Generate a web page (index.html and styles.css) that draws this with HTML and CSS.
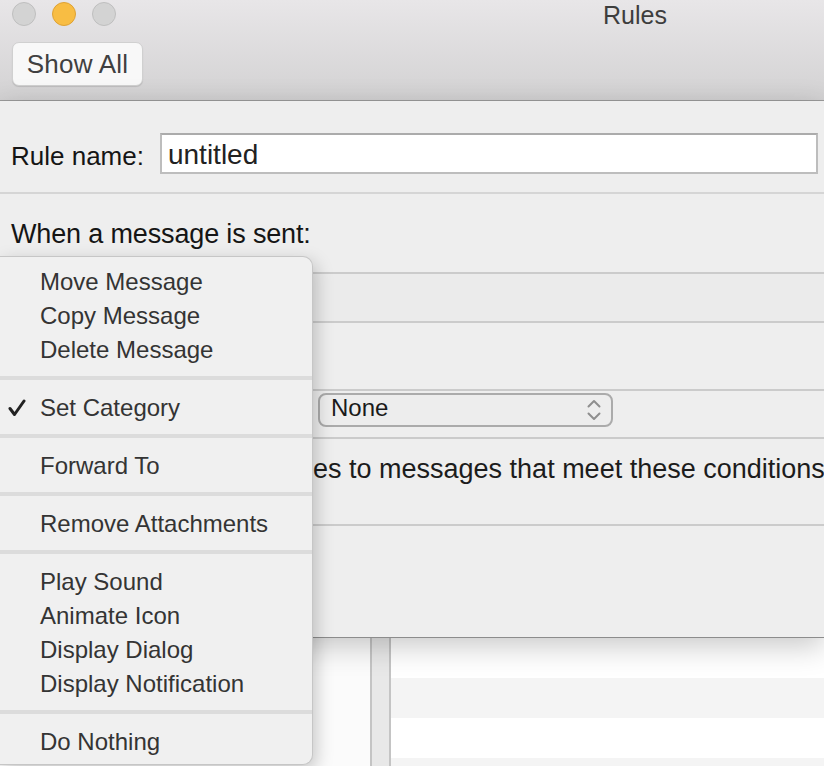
FILE: index.html
```html
<!DOCTYPE html>
<html>
<head>
<meta charset="utf-8">
<link rel="stylesheet" href="styles.css">
</head>
<body>
<div class="window">
  <header class="titlebar">
    <div class="titlerow">
      <div class="lights">
        <span class="light"></span>
        <span class="light yellow"></span>
        <span class="light"></span>
      </div>
      <div class="title">Rules</div>
    </div>
    <div class="toolbar"><button class="btn">Show All</button></div>
  </header>

  <section class="sheet">
    <div class="name-row">
      <label class="name-label">Rule name:</label>
      <div class="input">untitled</div>
    </div>
    <div class="sep"></div>
    <div class="when">When a message is sent:</div>
    <div class="rows">
      <div class="row r1"></div>
      <div class="row r2"></div>
      <div class="row r3">
        <div class="cat-label"></div>
        <div class="popup">
          <span>None</span>
          <svg class="chev" width="14" height="22" viewBox="0 0 14 22"><path d="M1.5 7.5 L7 2 L12.5 7.5 M1.5 14.5 L7 20 L12.5 14.5" fill="none" stroke="#8e8e8e" stroke-width="2" stroke-linecap="round" stroke-linejoin="round"/></svg>
        </div>
      </div>
      <div class="row r4">
        <span class="cond">es to messages that meet these conditions</span>
      </div>
      <div class="row r5"></div>
    </div>
  </section>

  <section class="list">
    <div class="left-pane"></div>
    <div class="divider"></div>
    <div class="stripes">
      <div class="stripe"></div>
      <div class="stripe"></div>
      <div class="stripe"></div>
      <div class="stripe"></div>
    </div>
  </section>

  <nav class="menu">
    <div class="item"><span class="check"></span>Move Message</div>
    <div class="item"><span class="check"></span>Copy Message</div>
    <div class="item"><span class="check"></span>Delete Message</div>
    <div class="msep"></div>
    <div class="item"><span class="check"><svg width="18" height="18" viewBox="0 0 18 18"><path d="M2 9.5 L6.5 15.5 L16 2" fill="none" stroke="#222" stroke-width="3" stroke-linecap="round" stroke-linejoin="round"/></svg></span>Set Category</div>
    <div class="msep"></div>
    <div class="item"><span class="check"></span>Forward To</div>
    <div class="msep"></div>
    <div class="item"><span class="check"></span>Remove Attachments</div>
    <div class="msep"></div>
    <div class="item"><span class="check"></span>Play Sound</div>
    <div class="item"><span class="check"></span>Animate Icon</div>
    <div class="item"><span class="check"></span>Display Dialog</div>
    <div class="item"><span class="check"></span>Display Notification</div>
    <div class="msep"></div>
    <div class="item"><span class="check"></span>Do Nothing</div>
  </nav>
</div>
</body>
</html>
```

FILE: styles.css
```css
html, body {
  margin: 0;
  padding: 0;
}
body {
  width: 824px;
  height: 766px;
  overflow: hidden;
  font-family: "Liberation Sans", Arial, sans-serif;
  background: #ffffff;
}
.window {
  position: relative;
  height: 766px;
  overflow: hidden;
}

/* title bar */
.titlebar {
  height: 100px;
  border-bottom: 1px solid #9b9b9b;
  background: linear-gradient(#e8e6e8, #d3d2d3);
}
.titlerow {
  display: flex;
  align-items: center;
  height: 28px;
}
.lights {
  display: flex;
  gap: 16px;
  padding-left: 12px;
}
.light {
  width: 22px;
  height: 22px;
  border-radius: 50%;
  background: #d3d3d3;
  border: 1px solid #bfbfbf;
}
.light.yellow {
  background: #f8bd43;
  border-color: #dea235;
}
.title {
  align-self: flex-start;
  margin-top: 1px;
  margin-left: 487px;
  font-size: 25px;
  line-height: 28px;
  color: #3d3d3d;
}
.toolbar {
  padding: 14px 0 0 12px;
}
.btn {
  display: block;
  width: 131px;
  height: 44px;
  padding: 0;
  font-family: "Liberation Sans", Arial, sans-serif;
  font-size: 26px;
  letter-spacing: 0.2px;
  color: #404040;
  background: #f8f8f8;
  border: 1px solid #d0d0d0;
  border-radius: 7px;
  box-shadow: 0 1px 1px rgba(0, 0, 0, 0.12);
}

/* sheet */
.sheet {
  position: relative;
  z-index: 1;
  height: 536px;
  display: flex;
  flex-direction: column;
  background: #eeeeee;
  border-bottom: 1px solid #8c8c8c;
  box-shadow: 0 8px 28px rgba(0, 0, 0, 0.22);
}
.name-row {
  display: flex;
  align-items: center;
  gap: 16px;
  padding: 32px 6px 0 11px;
}
.name-label {
  font-size: 26px;
  line-height: 30px;
  padding-top: 4px;
  color: #151515;
}
.input {
  flex: 1;
  box-sizing: border-box;
  height: 41px;
  padding: 2px 0 0 6px;
  font-size: 28px;
  line-height: 35px;
  color: #222;
  background: #ffffff;
  border: 2px solid #bdbdbd;
  border-top-color: #ababab;
}
.sep {
  height: 2px;
  margin-top: 18px;
  background: #d5d5d5;
}
.when {
  margin-top: 25px;
  padding-left: 11px;
  font-size: 27px;
  letter-spacing: -0.15px;
  line-height: 30px;
  color: #151515;
}
.rows {
  flex: 1;
  display: flex;
  flex-direction: column;
  margin-top: 23px;
}
.row {
  box-sizing: border-box;
  border-top: 2px solid #cbcbcb;
}
.r1 { height: 49px; background: #ebebeb; }
.r2 { height: 68px; }
.r3 {
  height: 48px;
  display: flex;
  gap: 12px;
  padding-top: 2px;
}
.cat-label {
  width: 306px;
}
.popup {
  box-sizing: border-box;
  width: 295px;
  height: 34px;
  display: flex;
  align-items: center;
  justify-content: space-between;
  padding: 0 10px 4px 11px;
  font-size: 24px;
  color: #1a1a1a;
  background: #ededed;
  border: 2px solid #ababab;
  border-radius: 8px;
}
.chev {
  margin-top: 4px;
}
.r4 {
  height: 87px;
  padding: 15px 0 0 313px;
}
.cond {
  display: block;
  white-space: nowrap;
  font-size: 27px;
  line-height: 30px;
  color: #1c1c1c;
}
.r5 { flex: 1; }

/* background list */
.list {
  display: flex;
  height: 128px;
}
.left-pane {
  width: 370px;
  background: #fbfbfb;
}
.divider {
  width: 17px;
  background: #e8e8e8;
  border-left: 2px solid #c4c4c4;
  border-right: 2px solid #c4c4c4;
}
.stripes {
  flex: 1;
}
.stripe {
  height: 40px;
  background: #ffffff;
}
.stripe:nth-child(even) {
  background: #f4f4f4;
}

/* pop-up menu */
.menu {
  position: absolute;
  z-index: 5;
  left: 0;
  top: 256px;
  width: 313px;
  height: 509px;
  box-sizing: border-box;
  padding: 8px 0 6px;
  background: #f0f0f0;
  border: 1px solid #c6c6c6;
  border-left: none;
  border-radius: 0 10px 10px 0;
  box-shadow: 3px 6px 18px rgba(0, 0, 0, 0.22);
}
.item {
  display: flex;
  align-items: center;
  height: 34px;
  font-size: 24px;
  color: #343434;
  white-space: nowrap;
}
.check {
  width: 40px;
  display: flex;
  align-items: center;
  padding-left: 8px;
  box-sizing: border-box;
}
.msep {
  height: 4px;
  margin: 9px 0 11px;
  background: #dcdcdc;
}
```
